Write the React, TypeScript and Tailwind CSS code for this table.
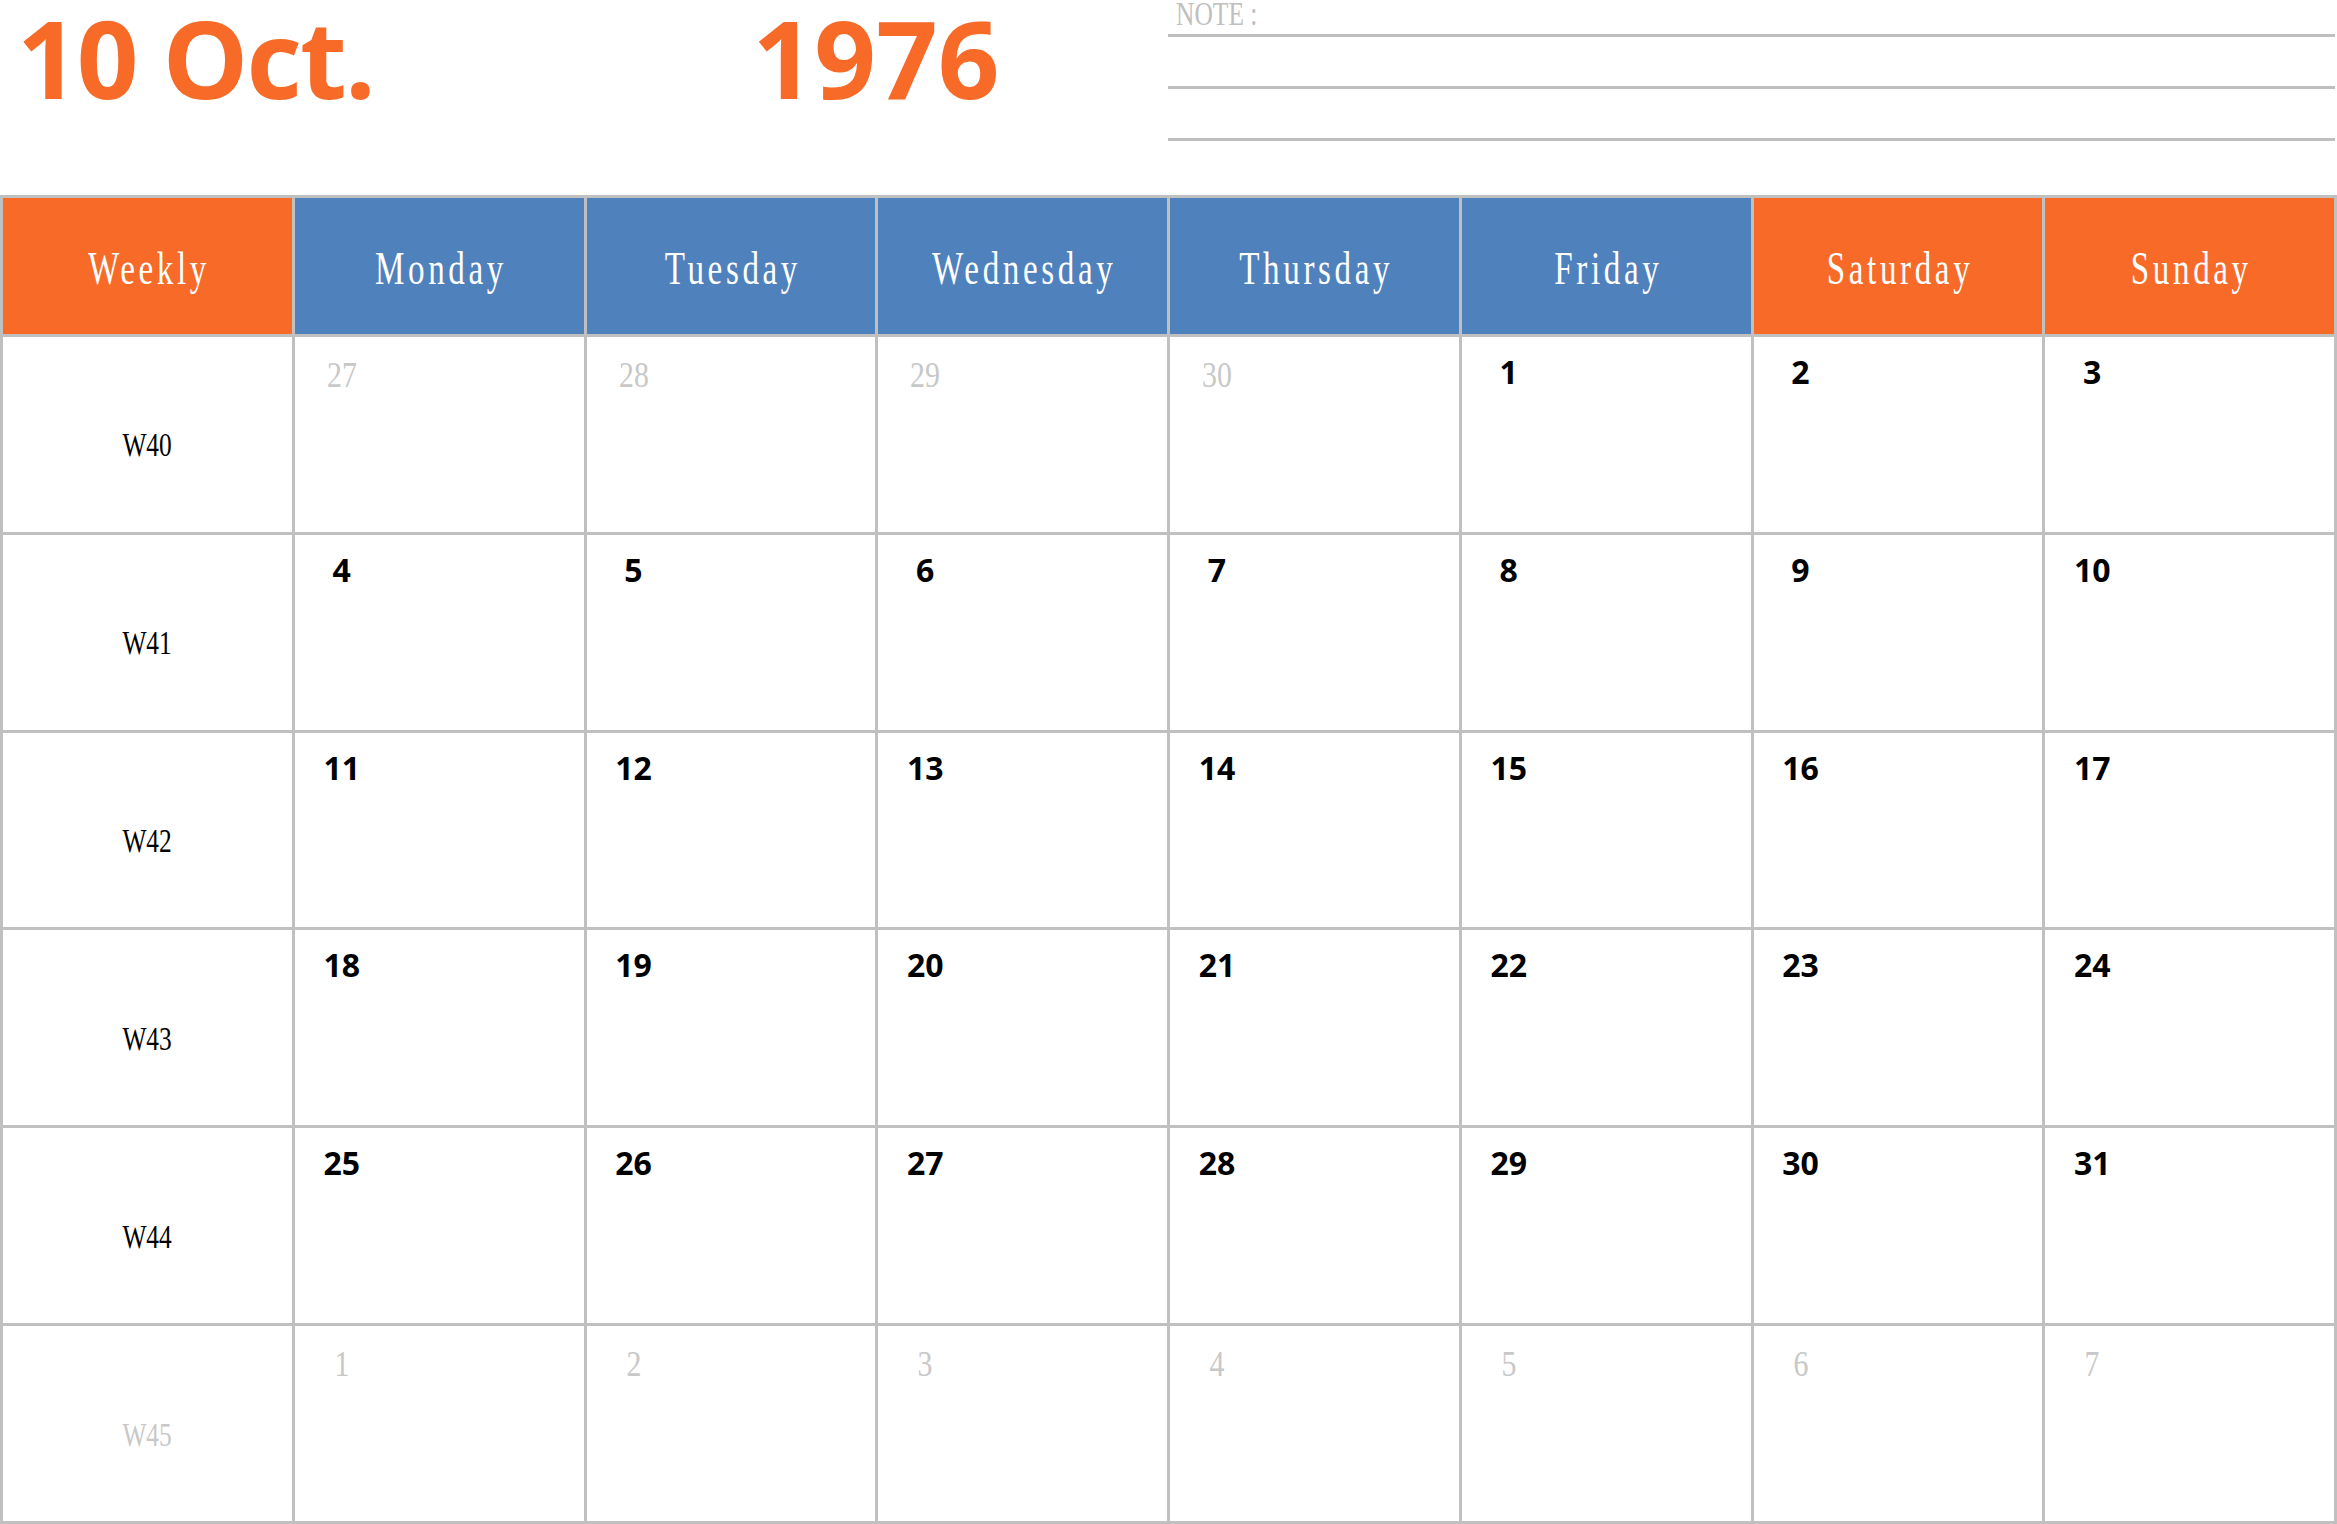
import React from 'react';

interface DayCell {
  day: number;
  faded: boolean;
}

interface WeekRow {
  label: string;
  faded: boolean;
  days: DayCell[];
}

const headers = [
  { name: 'Weekly', weekend: true },
  { name: 'Monday', weekend: false },
  { name: 'Tuesday', weekend: false },
  { name: 'Wednesday', weekend: false },
  { name: 'Thursday', weekend: false },
  { name: 'Friday', weekend: false },
  { name: 'Saturday', weekend: true },
  { name: 'Sunday', weekend: true },
];

const range = (from: number, to: number, faded = false): DayCell[] =>
  Array.from({ length: to - from + 1 }, (_, i) => ({ day: from + i, faded }));

const weeks: WeekRow[] = [
  { label: 'W40', faded: false, days: [...range(27, 30, true), ...range(1, 3)] },
  { label: 'W41', faded: false, days: range(4, 10) },
  { label: 'W42', faded: false, days: range(11, 17) },
  { label: 'W43', faded: false, days: range(18, 24) },
  { label: 'W44', faded: false, days: range(25, 31) },
  { label: 'W45', faded: true, days: range(1, 7, true) },
];

const Title: React.FC = () => (
  <div className="flex h-[195px] items-start">
    <div className="w-[584px] pl-[17px] pt-[4px]">
      <span className="font-['Open_Sans',sans-serif] text-[108px] font-bold leading-none tracking-[-2px] text-[#f76a27]">
        10 Oct.
      </span>
    </div>
    <div className="w-[584px] pt-[4px] text-center">
      <span className="font-['Open_Sans',sans-serif] text-[108px] font-bold leading-none text-[#f76a27]">
        1976
      </span>
    </div>
    <div className="mr-[2px] flex-1">
      <div className="h-[37px] border-b-[3px] border-[#bfbfbf] pl-2">
        <span className="inline-block origin-left scale-x-[0.75] font-['Liberation_Serif',serif] text-[34px] leading-[28px] text-[#c0c0c0]">
          NOTE :
        </span>
      </div>
      <div className="h-[52px] border-b-[3px] border-[#bfbfbf]" />
      <div className="h-[52px] border-b-[3px] border-[#bfbfbf]" />
    </div>
  </div>
);

const Calendar: React.FC = () => (
  <div className="grid h-[1329px] grid-cols-8 grid-rows-[136px_repeat(6,1fr)] gap-[3px] bg-[#c0c0c0] p-[3px]">
    {headers.map((h) => (
      <div
        key={h.name}
        className={`flex items-center justify-center pt-[5px] ${h.weekend ? 'bg-[#f76a27]' : 'bg-[#4f81bd]'}`}
      >
        <span className="inline-block scale-x-[0.72] pl-[5px] font-['Liberation_Serif',serif] text-[46px] leading-none tracking-[5px] text-white">
          {h.name}
        </span>
      </div>
    ))}
    {weeks.map((w) => (
      <React.Fragment key={w.label}>
        <div className="flex items-center justify-center bg-white pt-[23px]">
          <span
            className={`inline-block scale-x-[0.77] font-['Liberation_Serif',serif] text-[33px] leading-none ${
              w.faded ? 'text-[#c8c8c8]' : 'text-black'
            }`}
          >
            {w.label}
          </span>
        </div>
        {w.days.map((d, i) => (
          <div key={i} className="bg-white">
            {d.faded ? (
              <div className="w-[94px] pt-[20px] text-center">
                <span className="inline-block scale-x-[0.83] font-['Liberation_Serif',serif] text-[36px] leading-none text-[#c8c8c8]">
                  {d.day}
                </span>
              </div>
            ) : (
              <div className="w-[94px] pt-[19px] text-center font-['Open_Sans',sans-serif] text-[32px] font-bold leading-none text-black">
                {d.day}
              </div>
            )}
          </div>
        ))}
      </React.Fragment>
    ))}
  </div>
);

const App: React.FC = () => {
  return (
    <div className="h-[1524px] w-[2337px] overflow-hidden bg-white">
      <Title />
      <Calendar />
    </div>
  );
};

export default App;
